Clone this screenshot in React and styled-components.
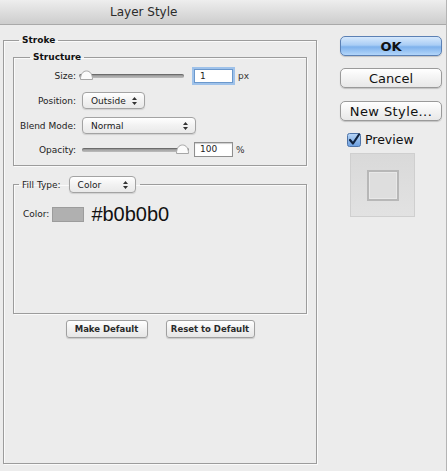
import React from "react";
import styled, { createGlobalStyle } from "styled-components";

const Global = createGlobalStyle`
  html, body { margin: 0; padding: 0; background: #ececec; }
  body { font-family: "DejaVu Sans", "Liberation Sans", sans-serif; color: #1a1a1a; }
  * { box-sizing: border-box; }
`;

const Window = styled.div`
  width: 447px;
  height: 471px;
  display: flex;
  flex-direction: column;
  background: #ececec;
  border-right: 1px solid #b4b4b4;
  overflow: hidden;
`;

const TitleBar = styled.div`
  height: 25px;
  flex: none;
  display: flex;
  align-items: center;
  padding-left: 110px;
  font-size: 12px;
  color: #2b2b2b;
  background: linear-gradient(#eeeeee, #dadada 60%, #cdcdcd);
  border-bottom: 1px solid #a9a9a9;
`;

const Body = styled.div`
  flex: 1;
  display: flex;
  padding: 10px 0 7px 3px;
  gap: 23px;
`;

const Group = styled.fieldset`
  margin: ${(p) => p.$mt || 0}px 0 0 0;
  padding: 0;
  min-width: 0;
  border: 1px solid #9c9c9c;
  box-shadow: 1px 1px 0 #fafafa, inset 1px 1px 0 #fafafa;
  display: flex;
  flex-direction: column;
  ${(p) => (p.$w ? `width: ${p.$w}px; flex: none;` : "")}
`;

const Legend = styled.legend`
  margin-left: ${(p) => p.$ml}px;
  padding: 0 3px;
  font-size: 9px;
  font-weight: bold;
  line-height: 11px;
  color: #111;
`;

const FillLegend = styled.legend`
  margin-left: 5px;
  padding: 0 4px 0 3px;
  display: flex;
  align-items: center;
  gap: 8px;
  font-size: 9px;
  color: #222;
`;

const StrokeInner = styled.div`
  flex: 1;
  padding: 6px 9px 0 9px;
  display: flex;
  flex-direction: column;
`;

const Rows = styled.div`
  display: flex;
  flex-direction: column;
  padding: 0 0 4px;
`;

const Row = styled.div`
  height: ${(p) => p.$h || 25}px;
  display: flex;
  align-items: center;
  gap: ${(p) => p.$gap ?? 5}px;
`;

const Label = styled.span`
  width: ${(p) => (p.$auto ? "auto" : "62px")};
  text-align: right;
  font-size: 9px;
  color: #222;
  flex: none;
`;

const SliderWrap = styled.div`
  position: relative;
  width: ${(p) => p.$w}px;
  height: 12px;
  display: flex;
  align-items: center;
  margin-left: ${(p) => p.$ml || 0}px;
`;

const Track = styled.div`
  width: 100%;
  height: 4px;
  border-radius: 2px;
  background: linear-gradient(#8f8f8f, #bdbdbd);
  box-shadow: inset 0 1px 1px rgba(0, 0, 0, 0.3);
`;

const Thumb = styled.svg`
  position: absolute;
  top: 0;
  left: ${(p) => p.$x}px;
`;

const TextBox = styled.div`
  width: 39px;
  height: ${(p) => (p.$focus ? 14 : 15)}px;
  margin-left: ${(p) => p.$ml || 0}px;
  background: #fff;
  border: 1px solid ${(p) => (p.$focus ? "#6b98cc" : "#8f8f8f")};
  box-shadow: ${(p) =>
    p.$focus ? "0 0 0 2px #9fc2ea" : "inset 0 1px 1px rgba(0,0,0,0.2)"};
  font-size: 9px;
  line-height: 13px;
  padding-left: 5px;
  color: #222;
`;

const Unit = styled.span`
  font-size: 9px;
  color: #333;
  margin-left: ${(p) => p.$ml || 0}px;
`;

const Popup = styled.div`
  width: ${(p) => p.$w}px;
  height: 17px;
  margin-left: ${(p) => p.$ml || 0}px;
  border: 1px solid #a3a3a3;
  border-radius: 4px;
  background: linear-gradient(#ffffff, #f2f2f2 50%, #e9e9e9);
  box-shadow: 0 1px 1px rgba(0, 0, 0, 0.12);
  display: flex;
  align-items: center;
  justify-content: space-between;
  padding: 0 7px 0 8px;
  font-size: 9px;
  font-weight: normal;
  color: #1a1a1a;
`;

const Arrows = () => (
  <svg width="5" height="8" viewBox="0 0 5 8">
    <path d="M2.5 0 L5 3 L0 3 Z M2.5 8 L5 5 L0 5 Z" fill="#333" />
  </svg>
);

const FillBody = styled.div`
  height: 120px;
  padding: 13px 0 0 9px;
`;

const Swatch = styled.div`
  width: 32px;
  height: 15px;
  background: #b0b0b0;
  border: 1px solid #9c9c9c;
`;

const HexText = styled.span`
  font-family: "Liberation Sans", Arial, sans-serif;
  font-size: 20px;
  color: #111;
  margin-left: 4px;
`;

const ButtonRow = styled.div`
  display: flex;
  justify-content: center;
  gap: 18px;
  margin-top: 6px;
`;

const SmallButton = styled.button`
  width: ${(p) => p.$w}px;
  height: 18px;
  border: 1px solid #a0a0a0;
  border-radius: 3px;
  background: linear-gradient(#ffffff, #f1f1f1 50%, #e6e6e6);
  box-shadow: 0 1px 1px rgba(0, 0, 0, 0.15);
  font-family: "DejaVu Sans", sans-serif;
  font-size: 8.5px;
  font-weight: bold;
  color: #2a2a2a;
  padding: 0;
`;

const Side = styled.div`
  width: 102px;
  flex: none;
  display: flex;
  flex-direction: column;
  padding-top: 1px;
`;

const BigButton = styled.button`
  height: 20px;
  width: 100%;
  margin-top: ${(p) => p.$mt || 0}px;
  border-radius: 5px;
  border: 1px solid ${(p) => (p.$primary ? "#5b80b4" : "#9a9a9a")};
  background: ${(p) =>
    p.$primary
      ? "linear-gradient(#d6e8fc, #a9cdf5 45%, #7eb1ec 55%, #b3d6fa)"
      : "linear-gradient(#ffffff, #f3f3f3 50%, #e8e8e8)"};
  box-shadow: 0 1px 1px rgba(0, 0, 0, 0.18);
  font-family: "DejaVu Sans", sans-serif;
  font-size: 13px;
  font-weight: ${(p) => (p.$primary ? "bold" : "normal")};
  color: #111;
  padding: 0;
  letter-spacing: ${(p) => p.$ls || 0}px;
`;

const CheckRow = styled.label`
  display: flex;
  align-items: center;
  gap: 4px;
  margin: 11px 0 0 7px;
  font-size: 12.5px;
  color: #111;
`;

const PreviewBox = styled.div`
  width: 65px;
  height: 64px;
  margin: 6px 0 0 10px;
  background: linear-gradient(#d9d9d9, #e2e2e2);
  border: 1px solid #cfcfcf;
  display: flex;
  align-items: center;
  justify-content: center;
`;

const PreviewSquare = styled.div`
  width: 32px;
  height: 31px;
  border: 2px solid #b7b7b7;
  background: #dedede;
  box-shadow: inset 0 0 0 1px #e8e8e8;
`;

const SliderThumb = ({ x }) => (
  <Thumb $x={x} width="13" height="10" viewBox="0 0 13 10">
    <path
      d="M0.5 9.5 C0.5 4 3 1 6.5 1 C10 1 12.5 4 12.5 9.5 Z"
      fill="#fbfbfb"
      stroke="#a6a6a6"
    />
  </Thumb>
);

const Check = () => (
  <svg width="14" height="14" viewBox="0 0 14 14">
    <defs>
      <linearGradient id="cb" x1="0" y1="0" x2="0" y2="1">
        <stop offset="0" stopColor="#b9d6f6" />
        <stop offset="1" stopColor="#6a9ee0" />
      </linearGradient>
    </defs>
    <rect x="0.5" y="0.5" width="13" height="13" rx="2" fill="url(#cb)" stroke="#4f74a8" />
    <path d="M3 7 L6 10.5 L12 1.5" fill="none" stroke="#10233f" strokeWidth="2.2" strokeLinecap="round" strokeLinejoin="round" />
  </svg>
);

export default function App() {
  return (
    <>
      <Global />
      <Window>
        <TitleBar>Layer Style</TitleBar>
        <Body>
          <Group $w={314}>
            <Legend $ml={15}>Stroke</Legend>
            <StrokeInner>
              <Group>
                <Legend $ml={16}>Structure</Legend>
                <Rows>
                  <Row>
                    <Label>Size:</Label>
                    <SliderWrap $w={105} $ml={-2}>
                      <Track />
                      <SliderThumb x={1} />
                    </SliderWrap>
                    <TextBox $focus $ml={5}>1</TextBox>
                    <Unit>px</Unit>
                  </Row>
                  <Row>
                    <Label>Position:</Label>
                    <Popup $w={63} $ml={1}>
                      Outside <Arrows />
                    </Popup>
                  </Row>
                  <Row>
                    <Label>Blend Mode:</Label>
                    <Popup $w={114} $ml={1}>
                      Normal <Arrows />
                    </Popup>
                  </Row>
                  <Row $h={23}>
                    <Label>Opacity:</Label>
                    <SliderWrap $w={107} $ml={1}>
                      <Track />
                      <SliderThumb x={94} />
                    </SliderWrap>
                    <TextBox $ml={0}>100</TextBox>
                    <Unit $ml={-2}>%</Unit>
                  </Row>
                </Rows>
              </Group>
              <Group $mt={10}>
                <FillLegend>
                  Fill Type:
                  <Popup $w={67}>
                    Color <Arrows />
                  </Popup>
                </FillLegend>
                <FillBody>
                  <Row $h={16} $gap={3}>
                    <Label $auto>Color:</Label>
                    <Swatch />
                    <HexText>#b0b0b0</HexText>
                  </Row>
                </FillBody>
              </Group>
              <ButtonRow>
                <SmallButton $w={82}>Make Default</SmallButton>
                <SmallButton $w={89}>Reset to Default</SmallButton>
              </ButtonRow>
            </StrokeInner>
          </Group>
          <Side>
            <BigButton $primary>OK</BigButton>
            <BigButton $mt={12}>Cancel</BigButton>
            <BigButton $mt={13} $ls={0.4}>New Style...</BigButton>
            <CheckRow>
              <Check />
              Preview
            </CheckRow>
            <PreviewBox>
              <PreviewSquare />
            </PreviewBox>
          </Side>
        </Body>
      </Window>
    </>
  );
}
